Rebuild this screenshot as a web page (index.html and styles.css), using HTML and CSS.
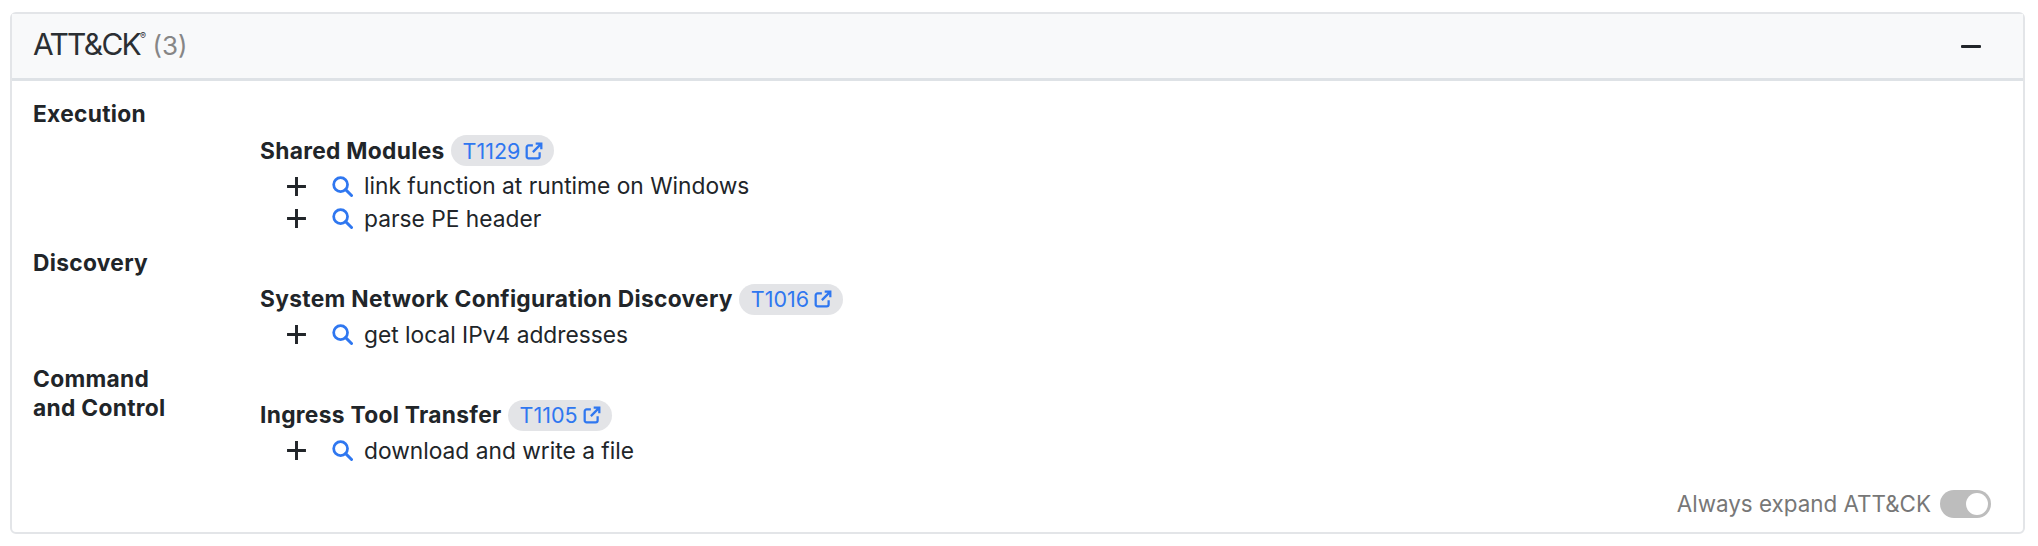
FILE: index.html
```html
<!DOCTYPE html>
<html lang="en">
<head>
<meta charset="utf-8">
<title>ATT&amp;CK</title>
<link rel="stylesheet" href="styles.css">
</head>
<body>
<svg class="defs" width="0" height="0" aria-hidden="true">
  <symbol id="plus" viewBox="0 0 20 20"><path d="M10 1v18M1 10h18" fill="none" stroke="currentColor" stroke-width="2.8"/></symbol>
  <symbol id="search" viewBox="0 0 20 20"><circle cx="8.2" cy="8.2" r="6.6" fill="none" stroke="currentColor" stroke-width="2.6"/><path d="M13 13l5.6 5.6" fill="none" stroke="currentColor" stroke-width="2.8" stroke-linecap="round"/></symbol>
  <symbol id="ext" viewBox="0 0 16 16"><path d="M7 3H3.2A1.7 1.7 0 0 0 1.5 4.7v8.1a1.7 1.7 0 0 0 1.7 1.7h8.1a1.7 1.7 0 0 0 1.7-1.7V9M9.5 1.5h5v5M14.3 1.7L7 9" fill="none" stroke="currentColor" stroke-width="2"/></symbol>
</svg>
<section class="card">
  <header class="card-head">
    <h2 class="title"><span class="logo">ATT&amp;CK<sup class="reg">®</sup></span> <span class="count">(3)</span></h2>
    <span class="minus"></span>
  </header>
  <div class="card-body">
    <div class="tactic">
      <div class="tactic-name">Execution</div>
      <div class="tactic-main">
        <div class="tech"><span class="tech-name">Shared Modules</span><a class="badge">T1129<svg class="ext"><use href="#ext"/></svg></a></div>
        <div class="cap"><svg class="plus"><use href="#plus"/></svg><svg class="search"><use href="#search"/></svg><span>link function at runtime on Windows</span></div>
        <div class="cap"><svg class="plus"><use href="#plus"/></svg><svg class="search"><use href="#search"/></svg><span>parse PE header</span></div>
      </div>
    </div>
    <div class="tactic">
      <div class="tactic-name">Discovery</div>
      <div class="tactic-main">
        <div class="tech"><span class="tech-name">System Network Configuration Discovery</span><a class="badge">T1016<svg class="ext"><use href="#ext"/></svg></a></div>
        <div class="cap"><svg class="plus"><use href="#plus"/></svg><svg class="search"><use href="#search"/></svg><span>get local IPv4 addresses</span></div>
      </div>
    </div>
    <div class="tactic">
      <div class="tactic-name">Command<br>and Control</div>
      <div class="tactic-main">
        <div class="tech"><span class="tech-name">Ingress Tool Transfer</span><a class="badge">T1105<svg class="ext"><use href="#ext"/></svg></a></div>
        <div class="cap"><svg class="plus"><use href="#plus"/></svg><svg class="search"><use href="#search"/></svg><span>download and write a file</span></div>
      </div>
    </div>
    <div class="foot">
      <span>Always expand ATT&amp;CK</span>
      <span class="toggle"><span class="knob"></span></span>
    </div>
  </div>
</section>
</body>
</html>
```
FILE: styles.css
```css
* { box-sizing: border-box; }
html, body { margin: 0; padding: 0; background: #fff; }
body {
  padding: 12px 13px 0 10px;
  font-family: Inter, "Liberation Sans", sans-serif;
  font-size: 22.75px;
  line-height: 32px;
  color: #212529;
}
.defs { position: absolute; }
.card {
  height: 522px;
  border: 2px solid #e3e5e8;
  border-radius: 6px;
  background: #fff;
}
.card-head {
  height: 67px;
  background: #f8f9fa;
  border-bottom: 3px solid #dee2e6;
  padding: 0 42px 0 21px;
  display: flex;
  align-items: center;
  justify-content: space-between;
}
.title { margin: 0 0 2px; font-size: 30px; font-weight: 400; line-height: 40px; }
.logo { letter-spacing: -1.7px; color: #2b2f33; }
.reg { font-size: 9px; line-height: 0; vertical-align: 16px; letter-spacing: 0; }
.count { color: #868686; font-size: 26px; margin-left: -2px; }
.minus { width: 20px; height: 3px; background: #212529; border-radius: 1px; }
.card-body { padding: 18px 21px 0; }
.tactic { display: flex; margin-bottom: 12.5px; }
.tactic-name { width: 227px; font-weight: 700; line-height: 29px; flex: none; letter-spacing: 0.3px; }
.tactic-main { padding-top: 32px; }
.tech { display: flex; align-items: center; gap: 6px; height: 39px; }
.tech-name { font-weight: 700; letter-spacing: 0.3px; }
.badge {
  display: inline-flex;
  align-items: center;
  gap: 5px;
  height: 31px;
  padding: 0 11px 0 12px;
  border-radius: 16px;
  background: #e3e4e7;
  color: #2f77f0;
  font-size: 21.5px;
}
.ext { width: 18px; height: 18px; }
.cap { display: flex; align-items: center; height: 32.5px; }
.plus { width: 21px; height: 21px; margin-left: 26px; flex: none; color: #212529; }
.search { width: 21px; height: 21px; margin: 0 11px 0 25px; flex: none; color: #2f77f0; }
.foot {
  display: flex;
  justify-content: flex-end;
  align-items: center;
  gap: 9px;
  margin-top: 21px;
  padding-right: 11px;
  font-size: 22.4px;
  color: #777;
}
.toggle {
  width: 51px;
  height: 28px;
  border-radius: 14px;
  background: #bdbdbd;
  display: flex;
  align-items: center;
  justify-content: flex-end;
  padding-right: 3px;
}
.knob { width: 22px; height: 22px; border-radius: 50%; background: #fff; }
```
